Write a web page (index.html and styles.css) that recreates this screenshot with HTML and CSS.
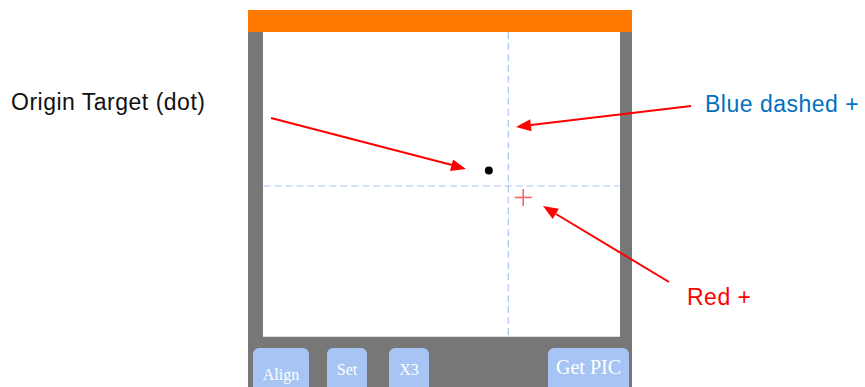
FILE: index.html
```html
<!DOCTYPE html>
<html>
<head>
<meta charset="utf-8">
<link rel="stylesheet" href="styles.css">
</head>
<body>
<div class="stage">
  <div class="device">
    <div class="header"></div>
    <div class="screen">
      <svg class="canvas" width="357" height="305" viewBox="0 0 357 305">
        <line x1="245.5" y1="0" x2="245.5" y2="305" stroke="#a8c3f3" stroke-width="1.2" stroke-dasharray="7 4"/>
        <line x1="0" y1="154.5" x2="357" y2="154.5" stroke="#a8c3f3" stroke-width="1.2" stroke-dasharray="7 4"/>
        <circle cx="226" cy="139" r="4" fill="#000"/>
        <line x1="252" y1="166" x2="269" y2="166" stroke="#f06565" stroke-width="1.6"/>
        <line x1="260.5" y1="157.5" x2="260.5" y2="174.5" stroke="#f06565" stroke-width="1.6"/>
      </svg>
    </div>
    <div class="toolbar">
      <div class="btn btn-align">Align</div>
      <div class="btn btn-set">Set</div>
      <div class="btn btn-x3">X3</div>
      <div class="btn btn-pic">Get PIC</div>
    </div>
  </div>
  <div class="label label-origin">Origin Target (dot)</div>
  <div class="label label-blue">Blue dashed +</div>
  <div class="label label-red">Red +</div>
  <svg class="arrows" width="865" height="387" viewBox="0 0 865 387">
    <line x1="271" y1="118" x2="452" y2="165" stroke="#ff0000" stroke-width="2"/>
    <polygon points="466,169 450,171 453,159.4" fill="#ff0000"/>
    <line x1="691" y1="106" x2="531" y2="125" stroke="#ff0000" stroke-width="2"/>
    <polygon points="516,127 530.2,119.2 531.6,131.2" fill="#ff0000"/>
    <line x1="669" y1="282" x2="556" y2="214" stroke="#ff0000" stroke-width="2"/>
    <polygon points="543,206 558.9,208.7 552.7,218.9" fill="#ff0000"/>
  </svg>
</div>
</body>
</html>
```
FILE: styles.css
```css
html, body {
  margin: 0;
  padding: 0;
  background: #ffffff;
}
body {
  width: 865px;
  height: 387px;
  overflow: hidden;
  font-family: "Liberation Sans", Arial, sans-serif;
}
.stage {
  position: relative;
  width: 865px;
  height: 387px;
  overflow: hidden;
}
.device {
  margin-left: 248px;
  padding-top: 10px;
  width: 384px;
  display: flex;
  flex-direction: column;
}
.header {
  height: 22px;
  background: #ff7800;
}
.device .screen,
.toolbar {
  background: #777777;
}
.screen {
  height: 305px;
  padding: 0 12px 0 15px;
}
.canvas {
  display: block;
  background: #ffffff;
  border-bottom: 1px solid #dcdcdc;
  box-sizing: border-box;
}
.toolbar {
  height: 50px;
  display: flex;
  align-items: flex-start;
  padding: 11px 3px 0 5px;
  box-sizing: border-box;
  overflow: hidden;
}
.btn {
  background: #a6c5f4;
  border-radius: 6px;
  height: 44px;
  color: #ffffff;
  font-family: "Liberation Serif", "Times New Roman", serif;
  font-size: 16px;
  line-height: 16px;
  text-align: center;
  box-sizing: border-box;
  flex: none;
}
.btn-align {
  width: 56px;
  margin-right: 18px;
  padding-top: 19px;
}
.btn-set {
  width: 40px;
  margin-right: 22px;
  padding-top: 14px;
}
.btn-x3 {
  width: 40px;
  padding-top: 14px;
}
.btn-pic {
  width: 81px;
  margin-left: auto;
  font-size: 20px;
  line-height: 20px;
  padding-top: 9px;
}
.label {
  position: absolute;
  font-size: 23px;
  line-height: 26px;
  letter-spacing: 0.5px;
  white-space: nowrap;
}
.label-origin {
  left: 11px;
  top: 89px;
  color: #111111;
}
.label-blue {
  left: 705px;
  top: 91px;
  color: #0070c0;
}
.label-red {
  left: 687px;
  top: 284px;
  color: #ff0000;
}
.arrows {
  position: absolute;
  left: 0;
  top: 0;
  pointer-events: none;
}
```
